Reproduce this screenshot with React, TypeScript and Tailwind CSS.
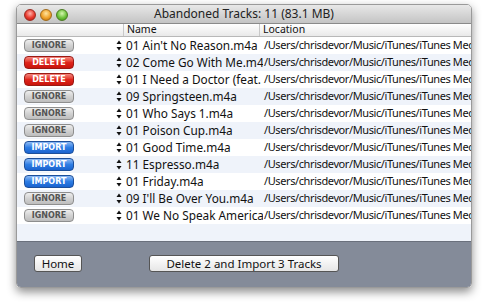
import React from "react";

type Action = "IGNORE" | "DELETE" | "IMPORT";
const rows: [Action, string][] = [
  ["IGNORE", "01 Ain't No Reason.m4a"],
  ["DELETE", "02 Come Go With Me.m4a"],
  ["DELETE", "01 I Need a Doctor (feat. E..."],
  ["IGNORE", "09 Springsteen.m4a"],
  ["IGNORE", "01 Who Says 1.m4a"],
  ["IGNORE", "01 Poison Cup.m4a"],
  ["IMPORT", "01 Good Time.m4a"],
  ["IMPORT", "11 Espresso.m4a"],
  ["IMPORT", "01 Friday.m4a"],
  ["IGNORE", "09 I'll Be Over You.m4a"],
  ["IGNORE", "01 We No Speak American..."],
];

function ActionButton({ kind }: { kind: Action }) {
  const cls =
    kind === "IGNORE"
      ? "bg-gradient-to-b from-[#eeeeee] via-[#d2d2d2] to-[#bdbdbd] border-[#8e8e8e] text-[#555]"
      : kind === "DELETE"
      ? "bg-gradient-to-b from-[#f4837c] via-[#e0251c] to-[#c8140c] border-[#9a1a14] text-white"
      : "bg-gradient-to-b from-[#8cbaf4] via-[#2f7ee4] to-[#1a63cf] border-[#1d4f9a] text-white";
  return (
    <div
      className={`w-[50px] h-[13px] rounded-[4px] border flex items-center justify-center text-[8px] font-bold leading-none shadow-[0_1px_0_rgba(255,255,255,0.6)] ${cls}`}
      style={{ fontFamily: '"DejaVu Sans", sans-serif' }}
    >
      {kind}
    </div>
  );
}

function Stepper() {
  return (
    <svg width="6" height="11" viewBox="0 0 6 11" className="block">
      <path d="M3 0.5 L5.5 4 L0.5 4 Z" fill="#111" />
      <path d="M3 10.5 L5.5 7 L0.5 7 Z" fill="#111" />
    </svg>
  );
}

export default function App() {
  return (
    <div
      className="w-[488px] h-[303px] bg-white relative overflow-hidden"
      style={{ fontFamily: '"Lucida Grande", "Noto Sans", sans-serif' }}
    >
      <div className="absolute left-[16px] top-[4px] w-[456px] h-[284px] rounded-[5px] overflow-hidden flex flex-col border border-[#9a9a9a] shadow-[0_4px_10px_rgba(0,0,0,0.45)]">
        {/* Title bar */}
        <div className="h-[19px] flex items-center bg-gradient-to-b from-[#e8e8e8] to-[#c4c4c4] border-b border-[#8a8a8a] relative shrink-0">
          <div className="flex gap-[4px] pl-[7px] pt-[1px] items-center">
            <div className="w-[12px] h-[12px] rounded-full bg-[radial-gradient(circle_at_50%_35%,#ffb3ab,#e8382c_55%,#a81a12)] border border-[#9a2a22]" />
            <div className="w-[12px] h-[12px] rounded-full bg-[radial-gradient(circle_at_50%_35%,#ffe5a0,#f0a22a_55%,#b56a0a)] border border-[#a06a1a]" />
            <div className="w-[12px] h-[12px] rounded-full bg-[radial-gradient(circle_at_50%_35%,#d6f5b0,#6cc23a_55%,#3d8a18)] border border-[#4a7a22]" />
          </div>
          <div className="absolute inset-0 flex items-center justify-center text-[12px] text-[#222]">
            Abandoned Tracks: 11 (83.1 MB)
          </div>
        </div>
        {/* Header */}
        <div className="h-[13px] flex items-center bg-gradient-to-b from-[#ffffff] to-[#e9e9e9] border-b border-[#b8b8b8] text-[10.5px] text-[#111] shrink-0">
          <div className="w-[107px] h-full border-r border-[#c8c8c8]" />
          <div className="w-[136px] h-full pl-[3px] flex items-center border-r border-[#c8c8c8]">Name</div>
          <div className="flex-1 pl-[3px] flex items-center">Location</div>
        </div>
        {/* Rows */}
        <div className="flex flex-col bg-white shrink-0">
          {rows.map(([kind, name], i) => (
            <div
              key={i}
              className={`h-[17px] flex items-center text-[#111] whitespace-nowrap ${
                i % 2 === 1 ? "bg-[#eff3fa]" : "bg-white"
              }`}
            >
              <div className="w-[95px] pl-[7px] flex items-center">
                <ActionButton kind={kind} />
              </div>
              <div className="w-[13px] flex items-center justify-center">
                <Stepper />
              </div>
              <div className="w-[138px] pl-[1px] pr-[2px] overflow-hidden text-[11.8px]">{name}</div>
              <div className="flex-1 pl-[1px] overflow-hidden text-[11px] tracking-[-0.4px]">
                /Users/chrisdevor/Music/iTunes/iTunes Media
              </div>
            </div>
          ))}
          <div className="h-[18px] bg-[#eff3fa] border-b border-[#6a707c]" />
        </div>
        {/* Bottom */}
        <div className="flex-1 bg-[#848b99] flex items-start pt-[13px] pl-[17px] text-[11.5px] text-[#111]">
          <div className="w-[48px] h-[17px] rounded-[3px] bg-gradient-to-b from-white to-[#e6e6e6] border border-[#555] flex items-center justify-center">
            Home
          </div>
          <div className="ml-[67px] w-[190px] h-[17px] rounded-[3px] bg-gradient-to-b from-white to-[#e6e6e6] border border-[#555] flex items-center justify-center">
            Delete 2 and Import 3 Tracks
          </div>
        </div>
      </div>
    </div>
  );
}
